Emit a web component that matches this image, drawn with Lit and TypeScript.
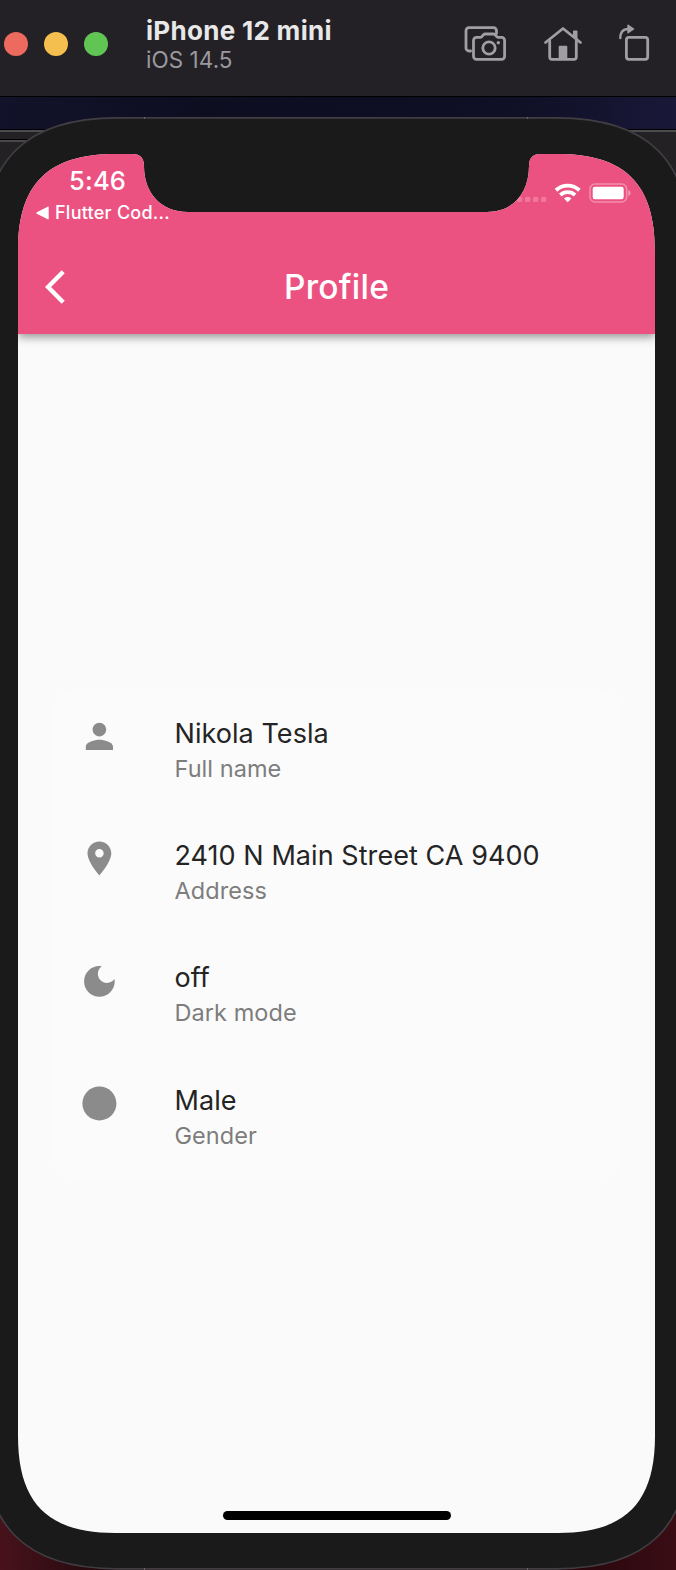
import { LitElement, html, css, svg } from "lit";
import { customElement, property } from "lit/decorators.js";

/** Rectangle with smooth corners: a is the corner's extent, k the distance of its handles from the edge. */
function squircle(x: number, y: number, w: number, h: number, a: number, k: number, top = ""): string {
  const R = x + w, B = y + h;
  return [
    `M${x + a} ${y}`, top, `L${R - a} ${y}`,
    `C${R - k} ${y} ${R} ${y + k} ${R} ${y + a}`,
    `L${R} ${B - a}`,
    `C${R} ${B - k} ${R - k} ${B} ${R - a} ${B}`,
    `L${x + a} ${B}`,
    `C${x + k} ${B} ${x} ${B - k} ${x} ${B - a}`,
    `L${x} ${y + a}`,
    `C${x} ${y + k} ${x + k} ${y} ${x + a} ${y}Z`,
  ].join("");
}

const NOTCH =
  "L115 0C122 0 126 4 126 12C126 38 142 58 170 58L469 58C496 58 511 38 511 12C511 4 515 0 522 0";
const SCREEN = squircle(0, 0, 637, 1379, 97, 30, NOTCH);
const BODY = squircle(-17.5, 20.8, 708.5, 1451, 135, 42.5);

const icons = {
  person: svg`<path d="M12 12c2.21 0 4-1.79 4-4s-1.79-4-4-4-4 1.79-4 4 1.79 4 4 4zm0 2c-2.67 0-8 1.34-8 4v2h16v-2c0-2.66-5.33-4-8-4z"/>`,
  place: svg`<path d="M12 2C8.13 2 5 5.13 5 9c0 5.25 7 13 7 13s7-7.75 7-13c0-3.87-3.13-7-7-7zm0 9.5a2.5 2.5 0 0 1 0-5 2.5 2.5 0 0 1 0 5z"/>`,
  moon: svg`<path d="M12 3c-4.97 0-9 4.03-9 9s4.03 9 9 9 9-4.03 9-9c0-.46-.04-.92-.1-1.36-.98 1.37-2.58 2.26-4.4 2.26-2.98 0-5.4-2.42-5.4-5.4 0-1.81.89-3.42 2.26-4.4-.44-.06-.9-.1-1.36-.1z"/>`,
  circle: svg`<circle cx="12" cy="12" r="10"/>`,
};

@customElement("sim-toolbar")
class SimToolbar extends LitElement {
  static styles = css`
    :host { display: flex; height: 96px; background: #232126; border-bottom: 1px solid #000; position: relative; }
    .lights { display: flex; gap: 16px; padding: 32px 0 0 4px; }
    .light { width: 24px; height: 24px; border-radius: 50%; }
    .red { background: #ed6a5e; }
    .yellow { background: #f5bf4f; }
    .green { background: #61c554; }
    .names { flex: 1; padding: 14px 0 0 38px; white-space: nowrap; }
    .device { font-size: 26px; line-height: 34px; font-weight: 700; color: #e8e8e8; letter-spacing: 0.3px; }
    .os { font-size: 22.5px; line-height: 24px; color: #9b999d; letter-spacing: 0.05px; }
    .tools { display: flex; gap: 36px; padding: 24px 25px 0 0; }
    svg { display: block; fill: none; stroke: #a09ea3; stroke-width: 2.8; stroke-linejoin: round; stroke-linecap: round; }
    .solid { fill: #a09ea3; stroke: none; }
  `;
  render() {
    return html`
      <div class="lights">
        <div class="light red"></div><div class="light yellow"></div><div class="light green"></div>
      </div>
      <div class="names"><div class="device">iPhone 12 mini</div><div class="os">iOS 14.5</div></div>
      <div class="tools">
        <svg width="44" height="38" viewBox="0 0 44 38">
          <path d="M7.6 27H6a3 3 0 0 1-3-3V6.700a3 3 0 0 1 3-3h24.500a3 3 0 0 1 3 3V9.500" />
          <path d="M13.500 13.400h4c1.800 0 2.300-3.400 4.600-3.400h8.400c2.300 0 2.800 3.400 4.600 3.400h3.500a3 3 0 0 1 3 3v15.900a3 3 0 0 1-3 3H13.500a3 3 0 0 1-3-3V16.400a3 3 0 0 1 3-3z" />
          <circle cx="26" cy="24" r="6.200" /><circle class="solid" cx="35.300" cy="18.700" r="1.700" />
        </svg>
        <svg width="40" height="38" viewBox="0 0 40 38">
          <path d="M2.500 18.500L20 4.500l17.500 14" />
          <path d="M6.700 17v16a2.300 2.300 0 0 0 2.300 2.300h22a2.300 2.300 0 0 0 2.300-2.300V17" />
          <path class="solid" d="M15.700 22.700a1 1 0 0 1 1-1h6.600a1 1 0 0 1 1 1V36h-8.600zM30 7.200a.8.8 0 0 1 .8-.8h2.900a.8.8 0 0 1 .8.8V16.500l-4.500-3.500z" />
        </svg>
        <svg width="32" height="38" viewBox="0 0 32 38">
          <rect x="7.400" y="13.400" width="21.300" height="21.900" rx="2.500" />
          <path d="M1.300 14c0-5.500 2-9 8-9" stroke-width="2.400" />
          <path class="solid" d="M8.300 1.200c0-.7.7-.9 1.200-.5l5.500 3.700c.5.400.5.800 0 1.200L9.500 9.300c-.5.400-1.200.2-1.200-.5z" />
        </svg>
      </div>`;
  }
}

@customElement("status-bar")
class StatusBar extends LitElement {
  static styles = css`
    :host { display: flex; justify-content: space-between; height: 84px; color: #fff; }
    .left { padding: 12px 0 0 17.5px; white-space: nowrap; }
    .time { font-size: 25.5px; line-height: 30px; font-weight: 500; padding-left: 33.5px; letter-spacing: 0.2px; }
    .back { display: flex; align-items: center; gap: 6.5px; font-size: 18px; line-height: 22px; margin-top: 5.5px; letter-spacing: 0.25px; font-weight: 450; }
    .right { padding: 28px 23px 0 0; }
    svg { display: block; }
  `;
  render() {
    return html`
      <div class="left">
        <div class="time">5:46</div>
        <div class="back">
          <svg width="13" height="14" viewBox="0 0 13 14"><path d="M12.700 1.300v11.400c0 .6-.5.9-1 .6L.8 7.700C.2 7.400.2 6.600.8 6.300L11.700.7c.5-.3 1 0 1 .6z" fill="#fff"/></svg>
          <span>Flutter Cod...</span>
        </div>
      </div>
      <div class="right">
        <svg width="116" height="22" viewBox="516 182 116 22">
          <g fill="#fff" opacity=".22">
            ${[517, 525, 533, 541].map((x) => svg`<rect x=${x} y="196.700" width="5.300" height="5.300" rx="1.600"/>`)}
          </g>
          <g fill="none" stroke="#fff" stroke-width="3.900">
            <path d="M556 190.200a17.200 17.200 0 0 1 23.400 0"/>
            <path d="M560.300 195a11 11 0 0 1 14.800 0"/>
          </g>
          <path d="M567.700 202.300l-3.700-3.800c2-2 5.400-2 7.400 0z" fill="#fff"/>
          <rect x="590" y="184" width="36.700" height="18" rx="5" fill="none" stroke="#fff" stroke-opacity=".35" stroke-width="1.500"/>
          <rect x="592.700" y="186.700" width="31" height="12.600" rx="2.200" fill="#fff"/>
          <path d="M628.300 190c3 1 3 5 0 6z" fill="#fff" fill-opacity=".4"/>
        </svg>
      </div>`;
  }
}

@customElement("profile-tile")
class ProfileTile extends LitElement {
  @property() icon: keyof typeof icons = "person";
  @property() value = "";
  @property() label = "";
  static styles = css`
    :host { display: flex; height: 122.3px; padding-left: 27px; box-sizing: border-box; }
    svg { width: 40.8px; height: 40.8px; margin-top: 27.4px; fill: #8b8b8b; flex: none; }
    .text { padding: 28.1px 0 0 54.7px; white-space: nowrap; }
    .value { font-size: 27px; line-height: 34px; color: #242424; letter-spacing: 0.06px; }
    .label { font-size: 23.5px; line-height: 36px; color: #7d7d7d; letter-spacing: 0.06px; }
  `;
  render() {
    return html`
      <svg viewBox="0 0 24 24">${icons[this.icon]}</svg>
      <div class="text"><div class="value">${this.value}</div><div class="label">${this.label}</div></div>`;
  }
}

@customElement("app-root")
class AppRoot extends LitElement {
  static styles = css`
    :host {
      display: block; width: 676px; height: 1570px; overflow: hidden; background: #101022;
      font-family: Inter, "Liberation Sans", sans-serif; -webkit-font-smoothing: antialiased;
    }
    .desk { position: relative; height: 1473px; }
    .backdrop { position: absolute; left: 0; top: 0; display: block; }
    .device { position: relative; padding: 57px 21px 37px 18px; }
    .screen { display: flex; flex-direction: column; height: 1379px; background: #fafafa; }
    .header { background: #ec5281; height: 180px; box-shadow: 0 3px 9px rgba(0,0,0,.42); flex: none; }
    .nav { display: grid; grid-template-columns: 80px 1fr 80px; height: 96px; align-items: center; }
    .nav svg { display: block; margin: 1px 0 0 27.3px; }
    .title { text-align: center; font-size: 33.5px; line-height: 40px; font-weight: 500; color: #fff; letter-spacing: 0.25px; margin-top: 1px; }
    .content { flex: 1; display: flex; flex-direction: column; justify-content: center; padding: 23px 33px 0 34px; }
    .card { background: #fbfbfb; border-radius: 25px; height: 490px; }
    .home { width: 228px; height: 9px; border-radius: 5px; background: #000; margin: 0 auto 13.5px; flex: none; }
  `;
  render() {
    return html`
      <sim-toolbar></sim-toolbar>
      <div class="desk">
        <svg class="backdrop" width="676" height="1473" viewBox="0 0 676 1473">
          <defs>
            <linearGradient id="sky"><stop offset="0" stop-color="#12122a"/><stop offset=".3" stop-color="#0e0e21"/><stop offset=".75" stop-color="#0f0f25"/><stop offset="1" stop-color="#191838"/></linearGradient>
            <linearGradient id="wine"><stop offset="0" stop-color="#48121b"/><stop offset=".15" stop-color="#24090e"/><stop offset=".85" stop-color="#28070d"/><stop offset="1" stop-color="#3a0d14"/></linearGradient>
          </defs>
          <rect width="676" height="33" fill="url(#sky)"/>
          <rect y="32" width="676" height="1" fill="#000"/>
          <rect y="33" width="676" height="2" fill="#4c4b4f"/>
          <rect y="35" width="676" height="400" fill="#232124"/>
          <rect y="42" width="338" height="1" fill="#000"/>
          <rect y="43" width="338" height="2" fill="#48474b"/>
          <rect y="1000" width="676" height="473" fill="url(#wine)"/>
          <path d=${BODY} fill="#1a1a1a" stroke="#403e43" stroke-width="1.700"/>
          <path d="M144.500 20v2M527.500 20v2M144.500 1471v2M527.500 1471v2" stroke="#66646a"/>
        </svg>
        <div class="device">
          <div class="screen" style="clip-path: path('${SCREEN}')">
            <div class="header">
              <status-bar></status-bar>
              <div class="nav">
                <svg width="20" height="34" viewBox="0 0 20 34"><path d="M18.200 1.800L3 17l15.200 15.200" fill="none" stroke="#fff" stroke-width="4.400"/></svg>
                <div class="title">Profile</div>
              </div>
            </div>
            <div class="content">
              <div class="card">
                <profile-tile icon="person" value="Nikola Tesla" label="Full name"></profile-tile>
                <profile-tile icon="place" value="2410 N Main Street CA 9400" label="Address"></profile-tile>
                <profile-tile icon="moon" value="off" label="Dark mode"></profile-tile>
                <profile-tile icon="circle" value="Male" label="Gender"></profile-tile>
              </div>
            </div>
            <div class="home"></div>
          </div>
        </div>
      </div>`;
  }
}
